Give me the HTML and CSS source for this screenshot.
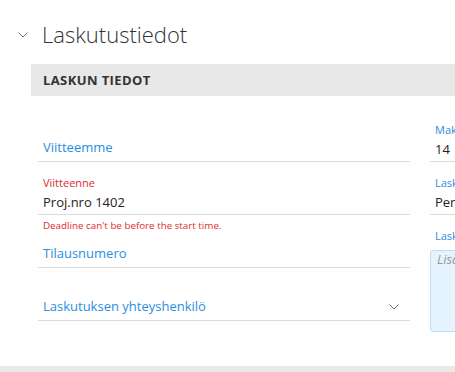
FILE: index.html
```html
<!DOCTYPE html>
<html lang="fi">
<head>
  <meta charset="UTF-8" />
  <meta name="viewport" content="width=device-width, initial-scale=1.0"/>
  <title>Laskutustiedot</title>
  <link rel="stylesheet" href="styles.css">
</head>
<body>
  <div class="card">
    <div class="page-header">
      <svg class="toggle" width="10" height="6" viewBox="0 0 10 6">
        <path d="M0.5 0.5 L5 5 L9.5 0.5" fill="none" stroke="#777" stroke-width="1"/>
      </svg>
      <h1>Laskutustiedot</h1>
    </div>

    <div class="section">
      <div class="section-bar">Laskun tiedot</div>

      <div class="form">
        <div class="column">
          <div class="field">
            <label class="float"></label>
            <div class="input empty">Viitteemme</div>
          </div>
          <div class="field error">
            <label class="float">Viitteenne</label>
            <div class="input">Proj.nro 1402</div>
            <div class="helper">Deadline can't be before the start time.</div>
          </div>
          <div class="field">
            <label class="float"></label>
            <div class="input empty">Tilausnumero</div>
          </div>
          <div class="field">
            <label class="float"></label>
            <div class="input empty select">
              Laskutuksen yhteyshenkilö
              <svg class="caret" width="10" height="6" viewBox="0 0 10 6">
                <path d="M0.5 0.5 L5 5 L9.5 0.5" fill="none" stroke="#666" stroke-width="1"/>
              </svg>
            </div>
          </div>
        </div>

        <div class="column">
          <div class="field">
            <label class="float">Maksuaika (pv)</label>
            <div class="input">14</div>
          </div>
          <div class="field">
            <label class="float">Laskutustapa</label>
            <div class="input">Perinteinen</div>
          </div>
          <div class="field">
            <label class="float">Laskun lisätiedot</label>
            <div class="textarea">Lisätiedot laskulle</div>
          </div>
        </div>
      </div>
    </div>
  </div>
</body>
</html>
```

FILE: styles.css
```css
body {
  margin: 0;
  background: #e9e9e9;
  font-family: "Open Sans", "Noto Sans", sans-serif;
  color: #222;
  overflow: hidden;
}
.card {
  background: white;
  height: 346px;
  padding-top: 20px;
  box-shadow: 0 1px 1px rgba(0,0,0,0.18);
  overflow: hidden;
}
.page-header {
  display: flex;
  align-items: center;
  height: 29px;
  padding-left: 18px;
}
.toggle {
  display: block;
  margin-top: 1px;
}
h1 {
  margin: 0 0 0 14px;
  font-size: 22px;
  font-weight: 300;
  line-height: 29px;
  color: #333;
}
.section {
  margin: 15px 0 0 31px;
  width: 800px;
}
.section-bar {
  height: 32px;
  line-height: 32px;
  padding-left: 12px;
  background: #e8e8e8;
  font-size: 13px;
  font-weight: bold;
  letter-spacing: 0.4px;
  text-transform: uppercase;
  color: #333;
}
.form {
  display: grid;
  grid-template-columns: 372px 372px;
  column-gap: 20px;
  margin-left: 7px;
  padding-top: 28px;
}
.field {
  height: 53px;
}
.float {
  display: block;
  height: 12px;
  line-height: 12px;
  padding-left: 5px;
  font-size: 11px;
  color: #2a8ee0;
}
.input {
  height: 22px;
  padding: 3px 5px 0;
  line-height: 21px;
  font-size: 13px;
  border-bottom: 1px solid #dcdcdc;
}
.input.empty {
  color: #2a8ee0;
  line-height: 16px;
}
.select {
  display: flex;
  justify-content: space-between;
  align-items: flex-start;
}
.caret {
  margin: 6px 6px 0 0;
}
.error .float,
.helper {
  color: #e02b2b;
}
.helper {
  padding: 5px 0 0 5px;
  font-size: 9.8px;
  line-height: 11px;
}
.textarea {
  height: 82px;
  margin-top: 8px;
  padding: 1px 6px 0;
  box-sizing: border-box;
  background: #e4f3fd;
  border: 1px solid #b9def5;
  border-radius: 3px;
  font-size: 13px;
  line-height: 14px;
  font-style: italic;
  color: #999;
}
```
